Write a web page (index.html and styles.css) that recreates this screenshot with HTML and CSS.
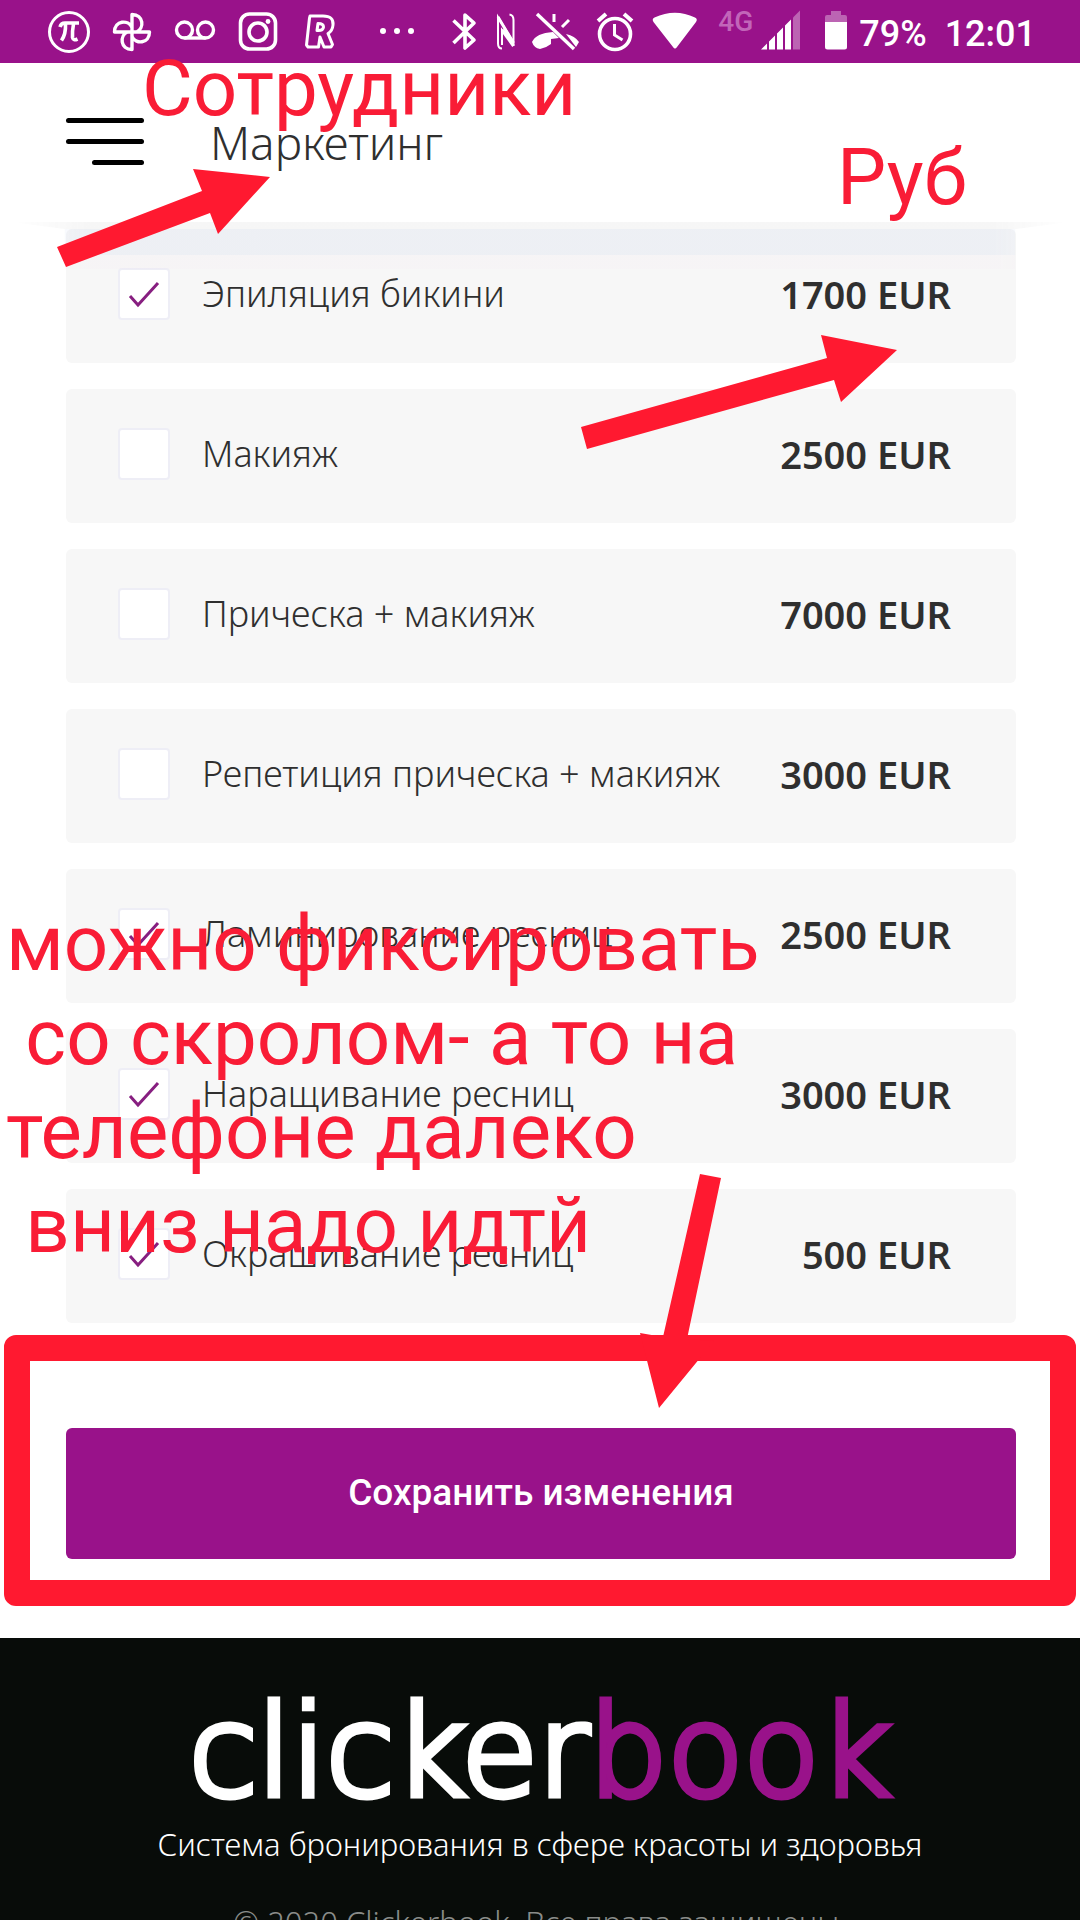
FILE: index.html
```html
<!DOCTYPE html>
<html lang="ru">
<head>
<meta charset="utf-8">
<meta name="viewport" content="width=device-width, initial-scale=1">
<title>Маркетинг – clickerbook</title>
<link rel="stylesheet" href="styles.css">
</head>
<body>
<div class="screen">
  <div class="status">
    <div class="status-left">
      <svg width="44" height="44" viewBox="0 0 44 44" fill="none" stroke="#fff" stroke-width="3"><circle cx="22" cy="22" r="19.5"/><path d="M13 17q1-4 5-4h14M18.500 14q.5 10-4 16.500M26.500 14q-1.500 8-1 13.500q.7 3.500 5 1.500" stroke-width="3.600"/></svg>
      <svg width="44" height="44" viewBox="0 0 44 44" fill="none" stroke="#fff" stroke-width="3.400" stroke-linejoin="round"><path d="M22 22V4.500c12 0 12.500 14 4.500 17.500M22 22h17.500c0 12-14 12.500-17.500 4.500M22 22v17.500c-12 0-12.500-14-4.500-17.500M22 22H4.500c0-12 14-12.500 17.500-4.500"/></svg>
      <svg width="44" height="44" viewBox="0 0 44 44" fill="none" stroke="#fff" stroke-width="3.400"><circle cx="11.500" cy="20" r="8"/><circle cx="32.500" cy="20" r="8"/><path d="M11.500 28h21"/></svg>
      <svg width="44" height="44" viewBox="0 0 44 44" fill="none" stroke="#fff" stroke-width="3.600"><rect x="4.500" y="4" width="35" height="35" rx="9"/><circle cx="22" cy="22" r="9"/><circle cx="32" cy="11.500" r="2.400" fill="#fff" stroke="none"/></svg>
      <svg width="44" height="44" viewBox="0 0 44 44" fill="none" stroke="#fff" stroke-width="3" stroke-linejoin="round"><path d="M11 6h13q11 0 10 9-.5 6-5 8.500l4.500 11-1.500 2.500h-7l-4-10-1.500 10H9l-1.500-2 3-27zM19 13.500l-1 7q6 .5 6.500-3.500 0-3.500-5.500-3.500z"/></svg>
      <svg class="more" width="44" height="44" viewBox="0 0 44 44" fill="#fff"><circle cx="8" cy="21" r="3"/><circle cx="22" cy="21" r="3"/><circle cx="36" cy="21" r="3"/></svg>
    </div>
    <div class="status-right">
      <svg width="28" height="44" viewBox="0 0 28 44" fill="none" stroke="#fff" stroke-width="3.600" stroke-linejoin="round"><path d="M3.500 10.500 24 30l-9 8V5l9 8L3.500 33"/></svg>
      <svg width="20" height="44" viewBox="0 0 20 44" fill="none" stroke="#fff" stroke-width="2"><path d="M6 38.500q-4 0-4-5V7l15.500 25.500V10q0-5-4-5.500M17.500 36V33L6 20v15"/><path d="M2 7l15.500 26M6 20l11.500 16" stroke-width="3"/></svg>
      <svg width="44" height="44" viewBox="0 0 44 44" fill="none" stroke="#fff" stroke-width="3.400" overflow="visible"><path d="M3 4l37 35"/><path d="M20 4v8M35 10l-7 7" stroke-width="3"/><path d="M-2 32q4-9 21-10l6 6-8 1 0 5q-5 4-11 5-6-1-8-7zM32 24q9 2 13 8l-3 5z" fill="#fff" stroke="none"/></svg>
      <svg width="38" height="44" viewBox="0 0 38 44" fill="none" stroke="#fff" stroke-width="3.600"><circle cx="19" cy="24" r="15.500"/><path d="M2 11l8-7M36 11l-8-7" stroke-width="4"/><path d="M18.500 14v11l8 5" stroke-width="3"/></svg>
      <svg width="48" height="44" viewBox="0 0 48 44" fill="#fff"><path d="M1.500 12q-2-3 1-4.500Q23 -2 43 7.500q3 1.500 1 4.500L25 37q-2 3-4 0z"/></svg>
      <div class="cell">
        <span class="net">4G</span>
        <svg width="46" height="44" viewBox="0 0 46 44" fill="#fff"><path d="M0 39.500 6 33.500V39.500zM8 39.500V31.500l6-6v14zM16 39.500V23.500l6-6v22zM24 39.500V15.500l6-6v30z"/><path d="M32 39.500V7.500l7-7v39z" opacity=".35"/></svg>
      </div>
      <div class="power">
        <svg width="22" height="44" viewBox="0 0 22 44" fill="#fff"><path d="M0 13V7q0-2 2-2h4V1h10v4h4q2 0 2 2v6z" opacity=".35"/><path d="M0 12h22v25q0 2.500-2.500 2.500h-17Q0 39.500 0 37z"/></svg>
        <span>79%</span>
      </div>
      <span>12:01</span>
    </div>
  </div>

  <header class="header">
    <button class="burger" type="button" aria-label="Меню"><i></i><i></i><i></i></button>
    <h1 class="title">Маркетинг</h1>
  </header>

  <main class="main">
    <form class="form">
      <ul class="services">
        <li><label class="service"><input type="checkbox" checked><span class="name">Эпиляция бикини</span><b class="price">1700 EUR</b></label></li>
        <li><label class="service"><input type="checkbox"><span class="name">Макияж</span><b class="price">2500 EUR</b></label></li>
        <li><label class="service"><input type="checkbox"><span class="name">Прическа + макияж</span><b class="price">7000 EUR</b></label></li>
        <li><label class="service"><input type="checkbox"><span class="name">Репетиция прическа + макияж</span><b class="price">3000 EUR</b></label></li>
        <li><label class="service"><input type="checkbox" checked><span class="name">Ламинирование ресниц</span><b class="price">2500 EUR</b></label></li>
        <li><label class="service"><input type="checkbox" checked><span class="name">Наращивание ресниц</span><b class="price">3000 EUR</b></label></li>
        <li><label class="service"><input type="checkbox" checked><span class="name">Окрашивание ресниц</span><b class="price">500 EUR</b></label></li>
      </ul>
      <button class="save" type="submit">Сохранить изменения</button>
    </form>
  </main>

  <footer class="footer">
    <a class="logo" href="#">clicker<span>book</span></a>
    <p class="tagline">Система бронирования в сфере красоты и здоровья</p>
    <p class="copy">© 2020 Clickerbook. Все права защищены.</p>
  </footer>

  <!-- Review notes drawn over the screen -->
  <div class="note note-title">Сотрудники</div>
  <div class="note note-currency">Руб</div>
  <div class="note note-save">можно фиксировать
 со скролом- а то на
телефоне далеко
 вниз надо идтй</div>
  <div class="frame"></div>
  <svg class="arrows" width="1080" height="1920" viewBox="0 0 1080 1920" fill="#ff1930">
    <path d="M57 247 202 191 193 169 270 177 218 234 210 213 66 267z"/>
    <path d="M581 427 827 358 821 335 897 350 841 402 834 380 587 449z"/>
    <path d="M700 1174 721 1178 687 1339 714 1341 659 1408 640 1333 663 1337z"/>
  </svg>
</div>
</body>
</html>
```
FILE: styles.css
```css
* {
  box-sizing: border-box;
}

body {
  margin: 0;
  background: #fff;
  color: #2f2f2f;
  font: 340 36px/52px "Noto Sans", "Open Sans", sans-serif;
}

.screen {
  position: relative;
  height: 100vh;
  overflow: hidden;
}

/* Phone status bar */
.status {
  display: flex;
  justify-content: space-between;
  height: 63px;
  padding: 0 44px 0 47px;
  background: #99128a;
  color: #fff;
  font: 500 36px/44px Roboto, sans-serif;
}

.status-left,
.status-right {
  display: flex;
  align-items: flex-start;
  padding-top: 10px;
}

.status-left {
  gap: 19px;
}

.status-right {
  gap: 18px;
}

.more {
  margin-left: 13px;
}

.cell {
  display: flex;
  gap: 8px;
}

.net {
  color: #c265b9;
  font-size: 28px;
  line-height: 24px;
}

.power {
  display: flex;
  gap: 12px;
}

.status span:not(.net) {
  padding-top: 2px;
}

/* App header */
.header {
  position: relative;
  z-index: 1;
  display: flex;
  align-items: center;
  gap: 66px;
  height: 159px;
  padding: 0 66px 2px;
  background: #fff;
}

.header::after {
  content: "";
  position: absolute;
  top: 100%;
  left: 0;
  right: 0;
  height: 47px;
  background: linear-gradient(rgba(80, 80, 80, .05) 7px, rgba(90, 130, 210, .06) 7px 33px, rgba(220, 120, 200, .02) 33px);
  -webkit-mask: linear-gradient(90deg, transparent 1%, #000 8% 92%, transparent 99%);
  mask: linear-gradient(90deg, transparent 1%, #000 8% 92%, transparent 99%);
  clip-path: polygon(1% 0, 99% 0, 94% 7px, 94% 100%, 6% 100%, 6% 7px);
}

.burger {
  display: flex;
  flex-direction: column;
  align-items: flex-end;
  gap: 16px;
  width: 78px;
  padding: 0;
  border: 0;
  background: none;
}

.burger i {
  width: 100%;
  height: 5px;
  border-radius: 3px;
  background: #000;
}

.burger i:last-child {
  width: 52px;
}

.title {
  margin: 0;
  font-size: 46px;
  font-weight: 340;
}

/* Services */
.main {
  padding: 7px 64px 79px 66px;
}

.services {
  display: flex;
  flex-direction: column;
  gap: 26px;
  margin: 0;
  padding: 0;
  list-style: none;
}

.service {
  display: flex;
  align-items: center;
  gap: 32px;
  padding: 39px 65px 43px 52px;
  border-radius: 6px;
  background: #f7f7f7;
}

.service input {
  appearance: none;
  flex: none;
  width: 52px;
  height: 52px;
  margin: 0;
  border: 2px solid #eeeef6;
  border-radius: 4px;
  background: #fff;
}

.service input:checked {
  background: #fff url("data:image/svg+xml,%3Csvg xmlns='http://www.w3.org/2000/svg' viewBox='0 0 48 48' fill='none' stroke='%23871f80' stroke-width='3'%3E%3Cpath d='M10 26l8 9 20-22'/%3E%3C/svg%3E") center / 48px 48px no-repeat;
}

.name {
  flex: 1;
}

.price {
  font-size: 38px;
  font-weight: 600;
}

.save {
  display: block;
  width: 100%;
  margin-top: 105px;
  padding: 39px 24px 40px;
  border: 0;
  border-radius: 6px;
  background: #99128a;
  color: #fff;
  font: 500 37px/52px Roboto, sans-serif;
}

/* Footer */
.footer {
  display: flex;
  flex-direction: column;
  align-items: center;
  padding-top: 48px;
  background: #080c09;
  color: #fff;
  text-align: center;
}

.logo {
  color: #fff;
  font: 200 124px/132px "DejaVu Sans", sans-serif;
  text-decoration: none;
  -webkit-text-stroke: 7px currentColor;
  stroke-linejoin: round;
}

.logo span {
  color: #99128a;
}

.tagline {
  margin: 0;
  font-size: 31px;
  line-height: 52px;
}

.copy {
  margin: 26px 0 0;
  color: #8a8c8a;
  font-size: 31px;
  line-height: 52px;
}

/* Review notes */
.note {
  position: absolute;
  z-index: 2;
  color: #f91c36;
  font: 400 78px/94px Roboto, sans-serif;
  white-space: pre;
}

.note-title {
  top: 42px;
  left: 142px;
}

.note-currency {
  top: 131px;
  left: 837px;
}

.note-save {
  top: 897px;
  left: 6px;
}

.frame {
  position: absolute;
  z-index: 2;
  top: 1335px;
  left: 4px;
  right: 4px;
  height: 271px;
  border: 26px solid #ff1930;
  border-radius: 12px;
}

.arrows {
  position: absolute;
  z-index: 2;
  top: 0;
  left: 0;
}
```
